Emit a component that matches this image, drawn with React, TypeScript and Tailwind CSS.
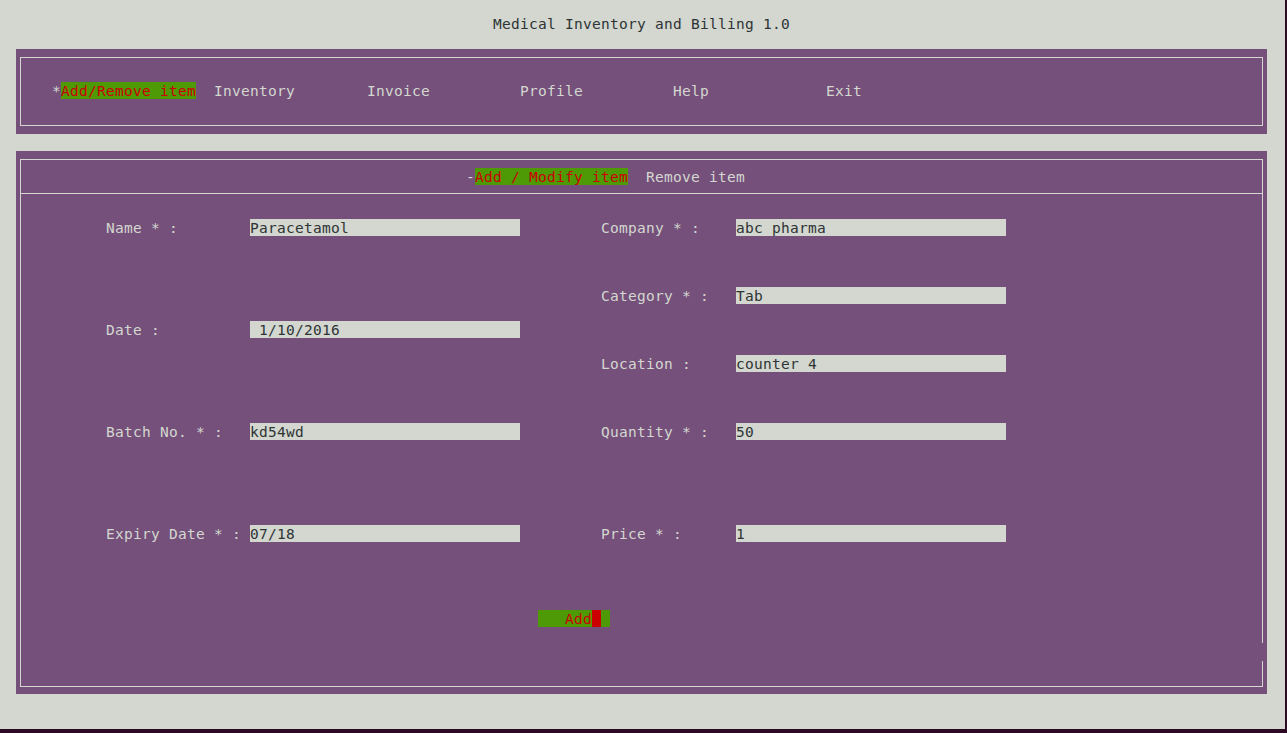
import React from 'react';

const mono = { fontFamily: '"DejaVu Sans Mono", "Liberation Mono", monospace' };

// one terminal row: 17px tall, glyphs sit 1px lower than the line box
const cell = 'h-[17px] pt-[1px] whitespace-pre';

const menu = [
  { label: 'Inventory', w: 'w-[153px]' },
  { label: 'Invoice', w: 'w-[153px]' },
  { label: 'Profile', w: 'w-[153px]' },
  { label: 'Help', w: 'w-[153px]' },
  { label: 'Exit', w: 'w-[100px]' },
];

const Field: React.FC<{ label: string; value: string; labelW: string; className?: string }> = ({ label, value, labelW, className }) => (
  <div className={`flex h-[17px] ${className ?? ''}`}>
    <span className={`${labelW} ${cell} text-[#d3d7cf]`}>{label}</span>
    <span className={`w-[270px] ${cell} bg-[#d3d7cf] text-[#2e3436]`}>{value}</span>
  </div>
);

const App: React.FC = () => {
  return (
    <div
      className="w-[1287px] h-[733px] flex flex-col bg-[#d3d7cf] overflow-hidden text-[14.5px] leading-[16px] tracking-[0.27px]"
      style={mono}
    >
      <div className="flex h-[729px]">
        <div className="w-[1285px] flex flex-col">
          {/* Title */}
          <div className="h-[49px] pt-[16px] pl-[493px] text-[#2e3436] whitespace-pre">
            Medical Inventory and Billing 1.0
          </div>

          {/* Main menu */}
          <div className="ml-[16px] w-[1251px] h-[85px] bg-[#75507b] pt-[8px] px-[4px]">
            <div className="h-[69px] border border-[#d3d7cf] pt-[24px] pl-[31px] flex">
              <div className="w-[162px] flex">
                <span className={`${cell} text-[#d3d7cf]`}>*</span>
                <span className={`${cell} bg-[#4e9a06] text-[#cc0000]`}>Add/Remove item</span>
              </div>
              {menu.map((m) => (
                <span key={m.label} className={`${m.w} ${cell} text-[#d3d7cf]`}>
                  {m.label}
                </span>
              ))}
            </div>
          </div>

          <div className="h-[17px]" />

          {/* Item panel */}
          <div className="ml-[16px] w-[1251px] h-[543px] bg-[#75507b] pt-[8px] px-[4px]">
            <div className="relative h-[528px] border border-[#d3d7cf] flex flex-col">
              <div className="h-[34px] shrink-0 pt-[8px] pl-[445px] flex border-b border-[#d3d7cf]">
                <span className={`${cell} text-[#d3d7cf]`}>-</span>
                <span className={`${cell} bg-[#4e9a06] text-[#cc0000]`}>Add / Modify item</span>
                <span className={`${cell} ml-[18px] text-[#d3d7cf]`}>Remove item</span>
              </div>

              <div className="flex pl-[85px]">
                <div className="flex flex-col">
                  <Field label="Name * :" value="Paracetamol" labelW="w-[144px]" className="mt-[25px]" />
                  <Field label="Date :" value=" 1/10/2016" labelW="w-[144px]" className="mt-[85px]" />
                  <Field label="Batch No. * :" value="kd54wd" labelW="w-[144px]" className="mt-[85px]" />
                  <Field label="Expiry Date * :" value="07/18" labelW="w-[144px]" className="mt-[85px]" />
                </div>
                <div className="flex flex-col ml-[81px]">
                  <Field label="Company * :" value="abc pharma" labelW="w-[135px]" className="mt-[25px]" />
                  <Field label="Category * :" value="Tab" labelW="w-[135px]" className="mt-[51px]" />
                  <Field label="Location :" value="counter 4" labelW="w-[135px]" className="mt-[51px]" />
                  <Field label="Quantity * :" value="50" labelW="w-[135px]" className="mt-[51px]" />
                  <Field label="Price * :" value="1" labelW="w-[135px]" className="mt-[85px]" />
                </div>
              </div>

              <div className="mt-[68px] ml-[517px] flex">
                <div className="w-[72px] h-[17px] bg-[#4e9a06] flex pl-[27px]">
                  <span className={`${cell} text-[#cc0000]`}>Add</span>
                  <span className="w-[9px] h-[17px] bg-[#cc0000]" />
                </div>
              </div>

              {/* gap in the right border */}
              <span className="absolute right-[-1px] top-[483px] w-[1px] h-[18px] bg-[#75507b]" />
            </div>
          </div>
        </div>
        <div className="w-[2px] bg-[#2c0a23]" />
      </div>
      <div className="h-[4px] bg-[#2c0a23]" />
    </div>
  );
};

export default App;
